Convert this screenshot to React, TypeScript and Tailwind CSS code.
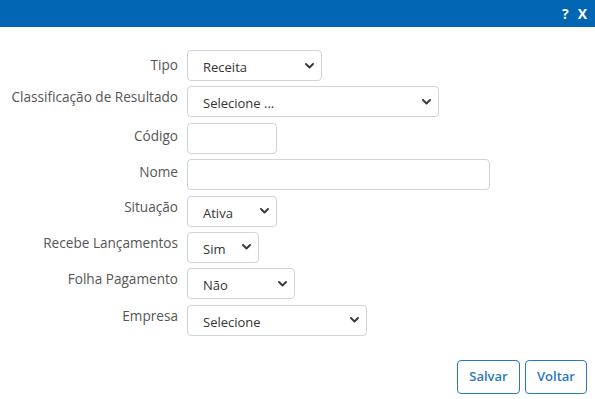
import React from "react";

const Chevron = () => (
  <svg width="9" height="6" viewBox="0 0 9 6" className="absolute right-[7px] top-1/2 -translate-y-1/2">
    <path d="M1 1l3.5 3.5L8 1" fill="none" stroke="#343a40" strokeWidth="1.9" strokeLinecap="round" strokeLinejoin="round" />
  </svg>
);

type Row = { label: string; w: number; value?: string; select?: boolean; lt: number };

const rows: Row[] = [
  { label: "Tipo", w: 135, value: "Receita", select: true, lt: 10 },
  { label: "Classificação de Resultado", w: 252, value: "Selecione ...", select: true, lt: 6 },
  { label: "Código", w: 90, lt: 8 },
  { label: "Nome", w: 303, lt: 8 },
  { label: "Situação", w: 90, value: "Ativa", select: true, lt: 6 },
  { label: "Recebe Lançamentos", w: 72, value: "Sim", select: true, lt: 6 },
  { label: "Folha Pagamento", w: 108, value: "Não", select: true, lt: 6 },
  { label: "Empresa", w: 180, value: "Selecione", select: true, lt: 6 },
];

export default function App() {
  return (
    <div className="w-[595px] h-[399px] bg-white flex flex-col" style={{ fontFamily: '"Open Sans", "Noto Sans", sans-serif' }}>
      <div className="h-[27px] bg-[#0066b3] flex items-center justify-end pr-[8px] gap-[9px] text-white font-bold text-[14px] leading-none">
        <span>?</span>
        <span>X</span>
      </div>
      <div className="flex flex-col gap-[5.4px] pt-[23px]">
        {rows.map((r) => (
          <div key={r.label} className="flex items-start h-[31px]">
            <div
              className="w-[178px] text-right text-[13.6px] leading-[18px] text-[#555]"
              style={{ paddingTop: r.lt - 4 }}
            >
              {r.label}
            </div>
            <div
              className="relative ml-[9px] h-[31px] border border-[#ced4da] rounded-[4px] bg-white"
              style={{ width: r.w }}
            >
              {r.value && (
                <span className="absolute left-[15px] top-[7px] text-[13px] leading-[18px] text-[#333]">{r.value}</span>
              )}
              {r.select && <Chevron />}
            </div>
          </div>
        ))}
      </div>
      <div className="flex justify-end gap-[5px] pr-[8px] mt-[24px]">
        <button className="w-[63px] h-[34px] border border-[#2a78c2] rounded-[4px] text-[#2a78c2] text-[13px] font-semibold bg-white">
          Salvar
        </button>
        <button className="w-[62px] h-[34px] border border-[#2a78c2] rounded-[4px] text-[#2a78c2] text-[13px] font-semibold bg-white">
          Voltar
        </button>
      </div>
    </div>
  );
}
